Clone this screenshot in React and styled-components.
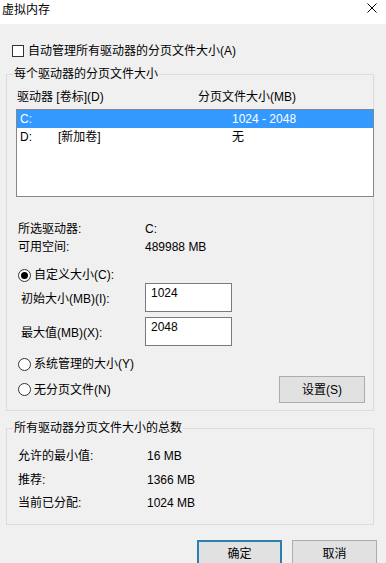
import React from 'react';
import styled, { createGlobalStyle } from 'styled-components';

const Global = createGlobalStyle`
  html, body { margin: 0; padding: 0; background: #f0f0f0; }
  body {
    font-family: "Liberation Sans", "Noto Sans CJK SC", sans-serif;
    font-size: 12px;
    color: #000;
  }
  * { box-sizing: border-box; }
`;

const Window = styled.div`
  width: 386px;
  height: 563px;
  overflow: hidden;
  background: #f0f0f0;
  display: flex;
  flex-direction: column;
`;

const TitleBar = styled.div`
  height: 24px;
  flex-shrink: 0;
  background: #fff;
  display: flex;
  align-items: flex-start;
  justify-content: space-between;
  padding: 2px 9px 0 2px;
  line-height: 16px;
`;

const CloseIcon = styled.svg`
  width: 10px;
  height: 10px;
  margin-top: 1px;
`;

const Body = styled.div`
  display: flex;
  flex-direction: column;
  padding: 0 0 0 6px;
`;

const CheckRow = styled.label`
  display: flex;
  align-items: center;
  gap: 4px;
  height: 16px;
  line-height: 16px;
  margin: 19px 0 0 6px;
`;

const CheckBox = styled.span`
  width: 12px;
  height: 12px;
  border: 1px solid #333;
  background: #fff;
`;

const Group = styled.fieldset`
  width: 368px;
  min-width: 0;
  margin: ${p => p.$top}px 0 0 0;
  border: 1px solid #dcdcdc;
  padding: ${p => p.$pad};
  display: flex;
  flex-direction: column;
`;

const Legend = styled.legend`
  padding: 0 1px;
  margin-left: -3px;
  line-height: 16px;
  height: 16px;
`;

const HeaderRow = styled.div`
  display: grid;
  grid-template-columns: 181px 1fr;
  height: 16px;
  line-height: 16px;
  padding-left: 1px;
`;

const ListBox = styled.div`
  margin-top: 4px;
  width: 358px;
  height: 88px;
  border: 1px solid #828790;
  background: #fff;
  display: flex;
  flex-direction: column;
`;

const ListRow = styled.div`
  display: grid;
  grid-template-columns: 38px 174px 1fr;
  height: 18px;
  line-height: 18px;
  padding-left: 3px;
  background: ${p => (p.$selected ? '#3399ff' : 'transparent')};
  color: ${p => (p.$selected ? '#fff' : '#000')};
`;

const InfoRow = styled.div`
  display: grid;
  grid-template-columns: ${p => p.$labelWidth}px 1fr;
  height: ${p => p.$height}px;
  line-height: ${p => p.$height}px;
  margin: ${p => p.$top || 0}px 0 0 ${p => p.$left}px;
`;

const RadioRow = styled.label`
  display: flex;
  align-items: center;
  gap: 3px;
  height: 16px;
  line-height: 16px;
  margin: ${p => p.$top}px 0 0 2px;
`;

const RadioCircle = styled.span`
  width: 13px;
  height: 13px;
  border-radius: 50%;
  border: 1px solid #333;
  background: #fff;
  display: flex;
  align-items: center;
  justify-content: center;
  &::after {
    content: '';
    width: 7px;
    height: 7px;
    border-radius: 50%;
    background: ${p => (p.$checked ? '#000' : 'transparent')};
  }
`;

const FieldRow = styled.div`
  display: grid;
  grid-template-columns: 124px 87px;
  align-items: center;
  margin: ${p => p.$top}px 0 0 5px;
`;

const FieldLabel = styled.span`
  line-height: 16px;
  padding-top: 3px;
`;

const TextBox = styled.input`
  width: 87px;
  height: 29px;
  border: 1px solid #7a7a7a;
  background: #fff;
  font: inherit;
  color: #000;
  padding: 0 4px 9px 5px;
  outline: none;
`;

const LastRow = styled.div`
  display: flex;
  align-items: center;
  justify-content: space-between;
  margin-top: 4px;
  padding-right: 8px;
`;

const Button = styled.button`
  width: ${p => p.$w}px;
  height: ${p => p.$h}px;
  background: #e1e1e1;
  border: ${p => (p.$default ? '2px solid #2a7fae' : '1px solid #adadad')};
  font: inherit;
  color: #000;
  padding: 0;
  line-height: 16px;
`;

const Footer = styled.div`
  display: flex;
  justify-content: flex-end;
  gap: 10px;
  margin-top: 15px;
  padding-right: 9px;
`;

export default function App() {
  return (
    <>
      <Global />
      <Window>
        <TitleBar>
          <span>虚拟内存</span>
          <CloseIcon viewBox="0 0 10 10">
            <path d="M0.5 0.5 L9.5 9.5 M9.5 0.5 L0.5 9.5" stroke="#000" strokeWidth="1" fill="none" />
          </CloseIcon>
        </TitleBar>
        <Body>
          <CheckRow>
            <CheckBox />
            <span>自动管理所有驱动器的分页文件大小(A)</span>
          </CheckRow>

          <Group $top={7} $pad="7px 0 7px 9px">
            <Legend>每个驱动器的分页文件大小</Legend>
            <HeaderRow>
              <span>驱动器 [卷标](D)</span>
              <span>分页文件大小(MB)</span>
            </HeaderRow>
            <ListBox>
              <ListRow $selected>
                <span>C:</span>
                <span></span>
                <span>1024 - 2048</span>
              </ListRow>
              <ListRow>
                <span>D:</span>
                <span>[新加卷]</span>
                <span>无</span>
              </ListRow>
            </ListBox>

            <InfoRow $labelWidth={127} $height={16} $top={24} $left={2}>
              <span>所选驱动器:</span>
              <span>C:</span>
            </InfoRow>
            <InfoRow $labelWidth={127} $height={16} $top={2} $left={2}>
              <span>可用空间:</span>
              <span>489988 MB</span>
            </InfoRow>

            <RadioRow $top={12}>
              <RadioCircle $checked />
              <span>自定义大小(C):</span>
            </RadioRow>
            <FieldRow $top={0}>
              <FieldLabel>初始大小(MB)(I):</FieldLabel>
              <TextBox readOnly value="1024" />
            </FieldRow>
            <FieldRow $top={5}>
              <FieldLabel>最大值(MB)(X):</FieldLabel>
              <TextBox readOnly value="2048" />
            </FieldRow>

            <RadioRow $top={10}>
              <RadioCircle />
              <span>系统管理的大小(Y)</span>
            </RadioRow>
            <LastRow>
              <RadioRow $top={0}>
                <RadioCircle />
                <span>无分页文件(N)</span>
              </RadioRow>
              <Button $w={86} $h={27}>设置(S)</Button>
            </LastRow>
          </Group>

          <Group $top={9} $pad="9px 0 8px 9px">
            <Legend>所有驱动器分页文件大小的总数</Legend>
            <InfoRow $labelWidth={129} $height={23.5} $left={2}>
              <span>允许的最小值:</span>
              <span>16 MB</span>
            </InfoRow>
            <InfoRow $labelWidth={129} $height={23.5} $left={2}>
              <span>推荐:</span>
              <span>1366 MB</span>
            </InfoRow>
            <InfoRow $labelWidth={129} $height={23.5} $left={2}>
              <span>当前已分配:</span>
              <span>1024 MB</span>
            </InfoRow>
          </Group>

          <Footer>
            <Button $w={85} $h={28} $default>确定</Button>
            <Button $w={85} $h={28}>取消</Button>
          </Footer>
        </Body>
      </Window>
    </>
  );
}
